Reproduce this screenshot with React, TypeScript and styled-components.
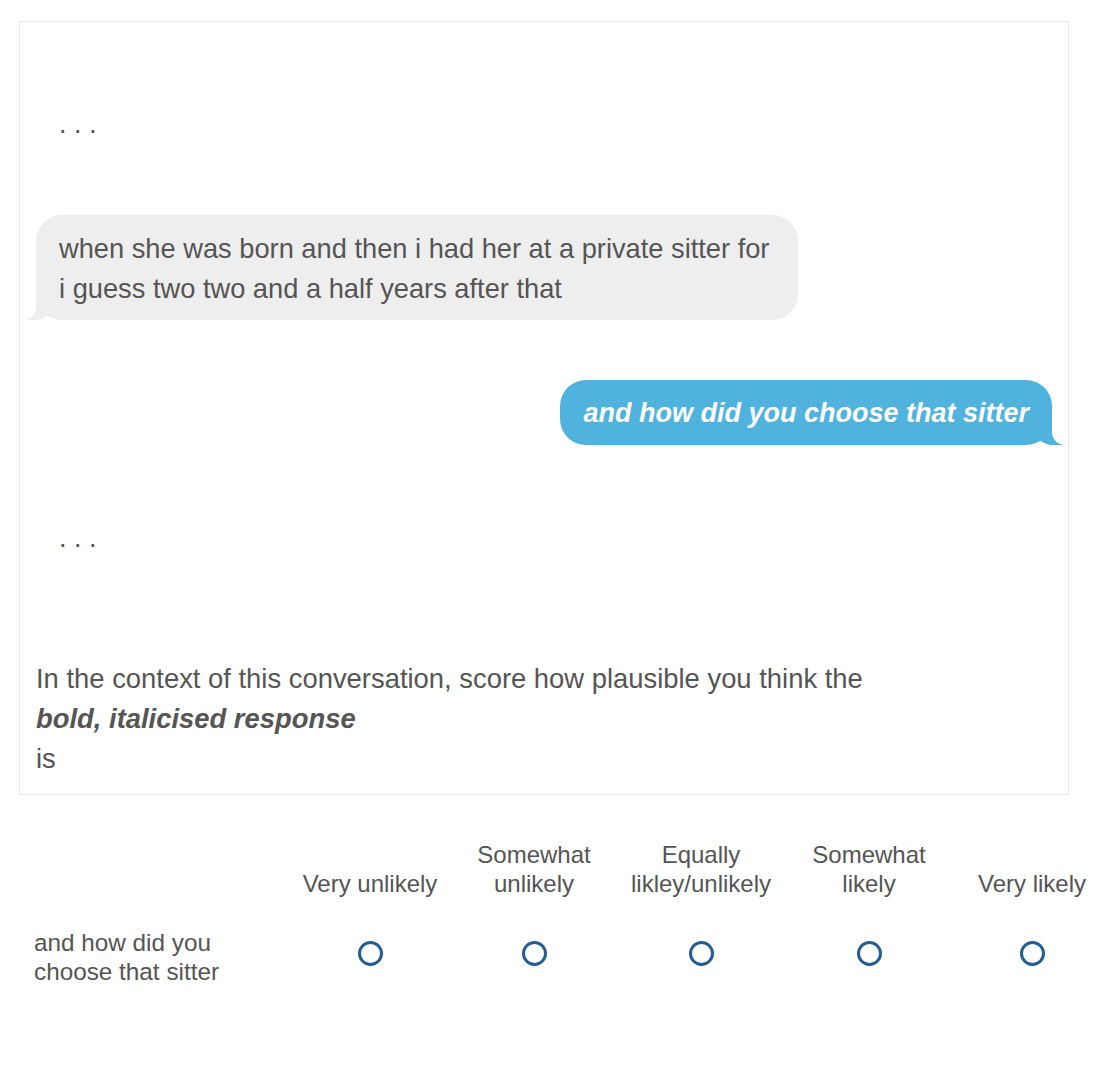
import React from "react";
import styled, { createGlobalStyle } from "styled-components";

const Global = createGlobalStyle`
  html, body { margin: 0; padding: 0; background: #ffffff; }
  body { font-family: "Liberation Sans", Arial, Helvetica, sans-serif; color: #555555; overflow-x: hidden; }
  * { box-sizing: border-box; }
`;

const Page = styled.div`
  width: 1110px;
  padding-top: 21px;
  padding-bottom: 60px;
`;

const QuestionBox = styled.div`
  margin-left: 19px;
  width: 1050px;
  border: 1px solid #e9e9e9;
  padding: 0 16px 15px;
  display: flex;
  flex-direction: column;
`;

const Typing = styled.div<{ $top: number }>`
  margin-top: ${(p) => p.$top}px;
  padding-left: 23px;
  font-size: 27px;
  line-height: 40px;
  color: #555555;
`;

const Bubble = styled.div<{ $top: number; $mine?: boolean }>`
  position: relative;
  margin-top: ${(p) => p.$top}px;
  max-width: 75%;
  align-self: ${(p) => (p.$mine ? "flex-end" : "flex-start")};
  padding: ${(p) => (p.$mine ? "13px 23px 12px" : "14px 23px 11px")};
  border-radius: 26px;
  font-size: ${(p) => (p.$mine ? "27px" : "27.25px")};
  line-height: 40px;
  background: ${(p) => (p.$mine ? "#4fb3de" : "#eeeeee")};
  color: ${(p) => (p.$mine ? "#ffffff" : "#555555")};
  font-weight: ${(p) => (p.$mine ? 700 : 400)};
  font-style: ${(p) => (p.$mine ? "italic" : "normal")};

  &::before {
    content: "";
    position: absolute;
    bottom: 0;
    ${(p) => (p.$mine ? "right: -11px;" : "left: -11px;")}
    width: 30px;
    height: 26px;
    background: ${(p) => (p.$mine ? "#4fb3de" : "#eeeeee")};
    ${(p) =>
      p.$mine
        ? "border-bottom-left-radius: 20px;"
        : "border-bottom-right-radius: 20px;"}
  }

  &::after {
    content: "";
    position: absolute;
    bottom: 0;
    ${(p) => (p.$mine ? "right: -15px;" : "left: -15px;")}
    width: 15px;
    height: 26px;
    background: #ffffff;
    ${(p) =>
      p.$mine
        ? "border-bottom-left-radius: 13px;"
        : "border-bottom-right-radius: 13px;"}
  }
`;

const BubbleText = styled.span`
  position: relative;
  z-index: 1;
`;

const Prompt = styled.div`
  margin-top: 101px;
  font-size: 27.4px;
  line-height: 40px;
  color: #555555;
`;

const Emph = styled.strong`
  display: block;
  font-weight: 700;
  font-style: italic;
`;

const Matrix = styled.div`
  margin-top: 45px;
  margin-left: 34px;
  display: grid;
  grid-template-columns: 256px 160px 168px 166px 170px 156px;
  row-gap: 30px;
  font-size: 24px;
  line-height: 29px;
  color: #555555;
`;

const HeadCell = styled.div`
  display: flex;
  align-items: flex-end;
  justify-content: center;
  text-align: center;
`;

const RowLabel = styled.div`
  display: flex;
  align-items: center;
  padding-right: 20px;
  font-size: 24.3px;
`;

const RadioCell = styled.label`
  display: flex;
  align-items: center;
  justify-content: center;
  padding-bottom: 7px;
  cursor: pointer;
`;

const Radio = styled.span`
  width: 25px;
  height: 25px;
  border-radius: 50%;
  border: 3px solid #245d94;
  background: #ffffff;
`;

const scale = [
  ["Very unlikely"],
  ["Somewhat", "unlikely"],
  ["Equally", "likley/unlikely"],
  ["Somewhat", "likely"],
  ["Very likely"],
];

export default function App() {
  return (
    <>
      <Global />
      <Page>
        <QuestionBox>
          <Typing $top={82}>. . .</Typing>
          <Bubble $top={71}>
            <BubbleText>
              when she was born and then i had her at a private sitter for i guess two two and a half years after that
            </BubbleText>
          </Bubble>
          <Bubble $top={60} $mine>
            <BubbleText>and how did you choose that sitter</BubbleText>
          </Bubble>
          <Typing $top={73}>. . .</Typing>
          <Prompt>
            In the context of this conversation, score how plausible you think the
            <Emph>bold, italicised response</Emph>
            is
          </Prompt>
        </QuestionBox>
        <Matrix>
          <div />
          {scale.map((lines, i) => (
            <HeadCell key={i}>
              <div>
                {lines.map((l, j) => (
                  <div key={j}>{l}</div>
                ))}
              </div>
            </HeadCell>
          ))}
          <RowLabel>and how did you choose that sitter</RowLabel>
          {scale.map((_, i) => (
            <RadioCell key={i}>
              <Radio />
            </RadioCell>
          ))}
        </Matrix>
      </Page>
    </>
  );
}
